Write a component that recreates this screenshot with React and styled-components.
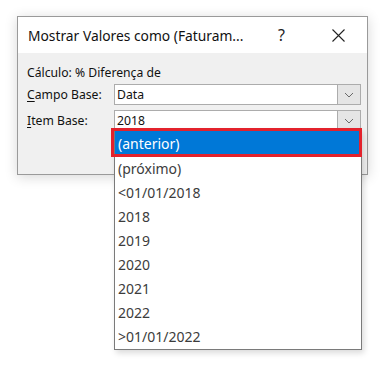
import React from 'react';
import styled, { createGlobalStyle, css } from 'styled-components';

const GlobalStyle = createGlobalStyle`
  html, body {
    margin: 0;
    padding: 0;
    background: #fff;
  }
  body {
    font-family: "Noto Sans", "Open Sans", sans-serif;
  }
`;

const Page = styled.div`
  width: 387px;
  height: 370px;
  padding: 16px 0 0 17px;
  box-sizing: border-box;
`;

const Dialog = styled.div`
  width: 351px;
  height: 159px;
  box-sizing: border-box;
  border: 1px solid #9a9a9a;
  background: #f0f0f0;
  box-shadow: 0 2px 12px rgba(0, 0, 0, 0.16);
  display: flex;
  flex-direction: column;
`;

const TitleBar = styled.div`
  height: 36px;
  background: #fff;
  display: flex;
  align-items: center;
  padding-left: 10px;
`;

const Title = styled.div`
  flex: 1;
  min-width: 0;
  font-size: 13.8px;
  color: #111;
  white-space: nowrap;
`;

const TitleButton = styled.div`
  width: ${({ w }) => w}px;
  height: 36px;
  display: flex;
  align-items: center;
  justify-content: center;
  font-size: 16px;
  color: #222;
`;

const Body = styled.div`
  flex: 1;
  padding: 10px 6px 0 9px;
  font-size: 12.2px;
  color: #111;
`;

const CalcLine = styled.div`
  height: 20px;
  line-height: 20px;
`;

const FieldRow = styled.div`
  display: flex;
  align-items: center;
  height: 21px;
  margin-top: ${({ gap }) => gap}px;
`;

const Label = styled.div`
  width: 87px;
  u {
    text-decoration: underline;
    text-underline-offset: 2px;
  }
`;

const Combo = styled.div`
  position: relative;
  flex: 1;
  height: 21px;
  box-sizing: border-box;
  border: 1px solid #acacac;
  background: #fff;
  display: flex;
`;

const ComboValue = styled.div`
  flex: 1;
  padding-left: 2px;
  line-height: 19px;
`;

const ComboButton = styled.div`
  width: 22px;
  border-left: 1px solid #acacac;
  background: #e5e5e5;
  display: flex;
  align-items: center;
  justify-content: center;
`;

const List = styled.div`
  position: absolute;
  top: 18px;
  left: -1px;
  right: -2px;
  z-index: 5;
  background: #fff;
  border: 1px solid #7a7a7a;
  padding-top: 1px;
  box-shadow: 2px 3px 6px rgba(0, 0, 0, 0.15);
`;

const Item = styled.div`
  position: relative;
  height: 24px;
  line-height: 24px;
  padding-left: 3px;
  font-size: 14px;
  color: #3c3c3c;
  white-space: nowrap;
  ${({ selected }) => selected && css`
    height: 26px;
    padding-top: 2px;
    box-sizing: border-box;
    line-height: 22px;
    background: #0078d7;
    color: #fff;
    &::after {
      content: '';
      position: absolute;
      top: -3px;
      left: -4px;
      right: -1px;
      bottom: 0;
      border: 3px solid #e3222c;
    }
  `}
`;

const Chevron = () => (
  <svg width="10" height="6" viewBox="0 0 10 6">
    <path d="M1 1 L5 5 L9 1" fill="none" stroke="#6a6a6a" strokeWidth="1" />
  </svg>
);

const CloseIcon = () => (
  <svg width="13" height="13" viewBox="0 0 13 13">
    <path d="M0.5 0.5 L12.5 12.5 M12.5 0.5 L0.5 12.5" stroke="#222" strokeWidth="1.1" />
  </svg>
);

const items = [
  '(anterior)',
  '(próximo)',
  '<01/01/2018',
  '2018',
  '2019',
  '2020',
  '2021',
  '2022',
  '>01/01/2022',
];

export default function App() {
  return (
    <Page>
      <GlobalStyle />
      <Dialog>
        <TitleBar>
          <Title>Mostrar Valores como (Faturam...</Title>
          <TitleButton w={55}>?</TitleButton>
          <TitleButton w={58}><CloseIcon /></TitleButton>
        </TitleBar>
        <Body>
          <CalcLine>Cálculo: % Diferença de</CalcLine>
          <FieldRow gap={1}>
            <Label><u>C</u>ampo Base:</Label>
            <Combo>
              <ComboValue>Data</ComboValue>
              <ComboButton><Chevron /></ComboButton>
            </Combo>
          </FieldRow>
          <FieldRow gap={5}>
            <Label><u>I</u>tem Base:</Label>
            <Combo>
              <ComboValue>2018</ComboValue>
              <ComboButton><Chevron /></ComboButton>
              <List>
                {items.map((t, i) => (
                  <Item key={t} selected={i === 0}>{t}</Item>
                ))}
              </List>
            </Combo>
          </FieldRow>
        </Body>
      </Dialog>
    </Page>
  );
}
